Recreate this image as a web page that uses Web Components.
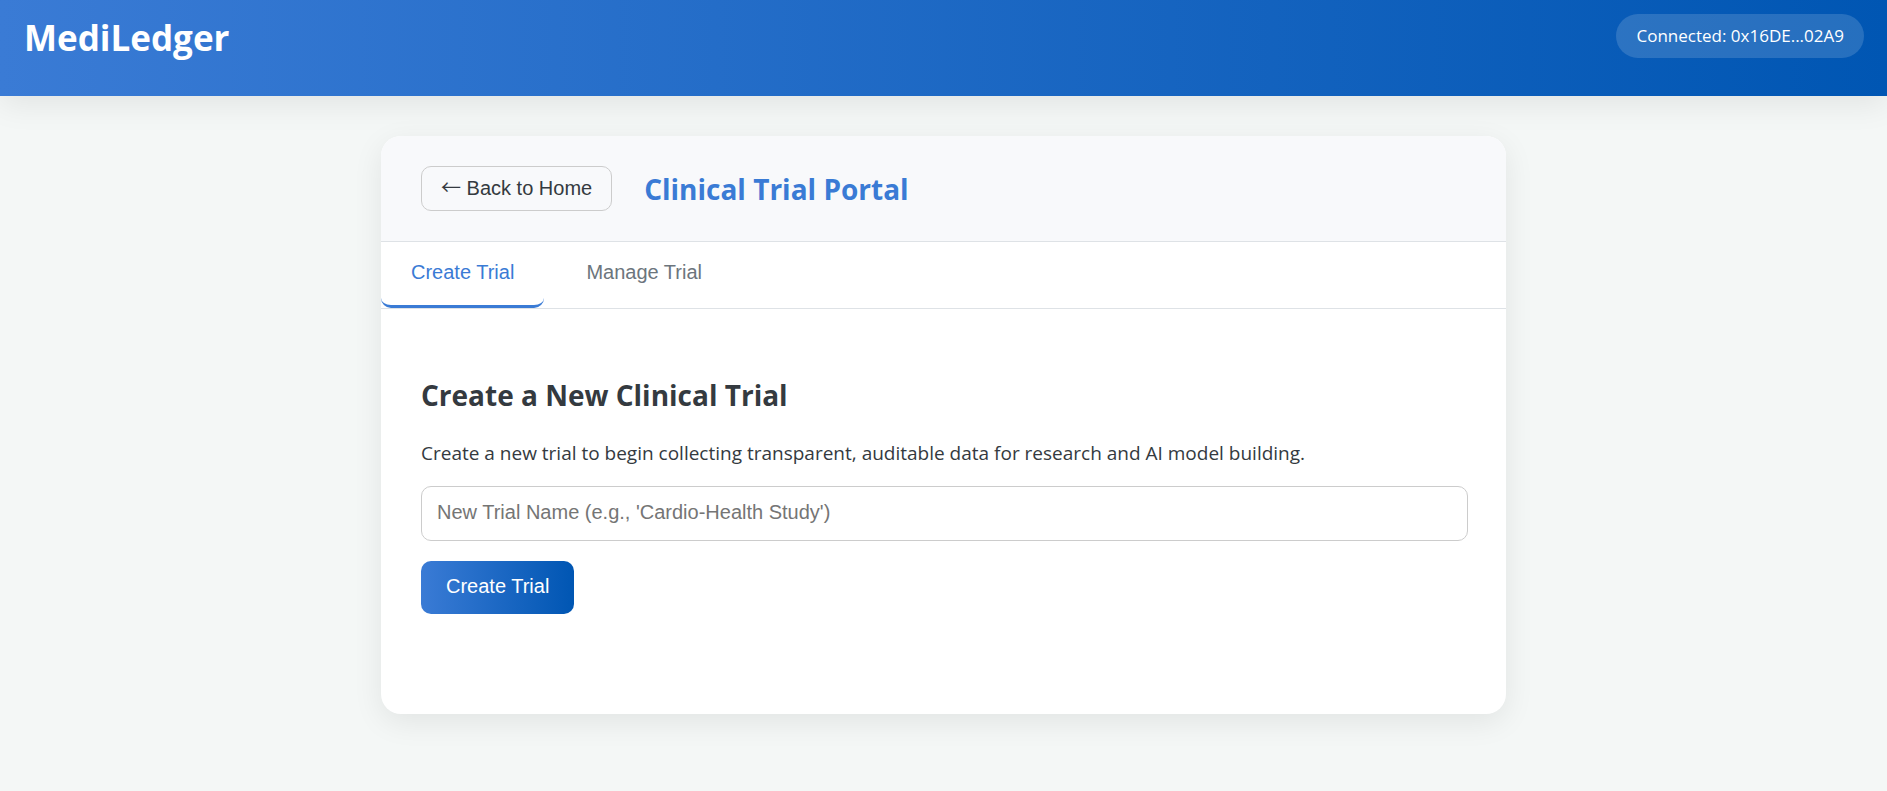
<!DOCTYPE html>
<html lang="en">
<head>
<meta charset="utf-8">
<meta name="viewport" content="width=device-width, initial-scale=1">
<title>MediLedger</title>
<style>
  :root {
    --primary: #3a7bd5;
    --primary-dark: #0056b3;
    --ink: #343a40;
    --muted: #6c757d;
    --line: #dee2e6;
    --control-line: #ccc;
    --shadow: 0 8px 30px rgba(0, 0, 0, .08);
    --ui: "Liberation Sans", Arial, sans-serif;
  }
  body {
    margin: 0;
    background: #f4f7f6;
    color: var(--ink);
    font: 19px/30px "Open Sans", "Noto Sans", sans-serif;
  }
</style>
</head>
<body>
<medi-app></medi-app>
<script>
  const define = (name, html) => {
    const template = document.createElement('template');
    template.innerHTML = html;
    customElements.define(name, class extends HTMLElement {
      constructor() {
        super();
        this.attachShadow({ mode: 'open' }).append(template.content.cloneNode(true));
      }
    });
  };

  define('medi-header', `
    <style>
      :host {
        display: flex;
        justify-content: space-between;
        align-items: flex-start;
        box-sizing: border-box;
        min-height: 96px;
        padding: 14px 23px 14px 24px;
        color: #fff;
        background: linear-gradient(to right, var(--primary), var(--primary-dark));
        box-shadow: var(--shadow);
      }
      h1 { margin: 0; font-size: 35px; line-height: 48px; font-weight: 700; }
      .wallet {
        padding: 7px 20px;
        border-radius: 25px;
        background: rgba(255, 255, 255, .15);
        font-size: 17px;
      }
    </style>
    <h1><slot></slot></h1>
    <div class="wallet"><slot name="wallet"></slot></div>
  `);

  define('medi-card', `
    <style>
      :host {
        display: block;
        width: 100%;
        max-width: 1125px;
        margin: 40px auto;
        border-radius: 20px;
        overflow: hidden;
        background: #fff;
        box-shadow: var(--shadow);
      }
    </style>
    <slot></slot>
  `);

  define('portal-heading', `
    <style>
      :host {
        display: flex;
        align-items: flex-start;
        gap: 32px;
        padding: 30px 40px 28px;
        background: #f8f9fb;
        border-bottom: 1px solid var(--line);
      }
      button {
        height: 45px;
        padding: 0 19px 2px;
        border: 1px solid var(--control-line);
        border-radius: 10px;
        background: transparent;
        color: var(--ink);
        font: 20px/23px var(--ui);
        cursor: pointer;
      }
      .arrow { font-family: "Noto Sans CJK SC", sans-serif; }
      h2 { margin: 0; color: var(--primary); font-size: 28px; line-height: 47px; font-weight: 700; }
    </style>
    <button type="button"><span class="arrow">←</span> Back to Home</button>
    <h2><slot></slot></h2>
  `);

  define('portal-tabs', `
    <style>
      :host { display: flex; gap: 12px; border-bottom: 1px solid var(--line); }
      button {
        height: 66px;
        padding: 0 30px 2px;
        border: 0;
        border-bottom: 3px solid transparent;
        border-radius: 10px;
        background: none;
        color: var(--muted);
        font: 20px/23px var(--ui);
        cursor: pointer;
      }
      button[aria-selected="true"] { color: var(--primary); border-bottom-color: var(--primary); }
    </style>
    <button type="button" role="tab" aria-selected="true">Create Trial</button>
    <button type="button" role="tab" aria-selected="false">Manage Trial</button>
  `);

  define('trial-form', `
    <style>
      :host { display: block; padding: 64px 38px 100px 40px; }
      h2 { margin: 0 0 20px; font-size: 28px; line-height: 45px; font-weight: 700; }
      p { margin: 0 0 18px; }
      input {
        display: block;
        box-sizing: border-box;
        width: 100%;
        height: 55px;
        margin: 0 0 20px;
        padding: 0 15px 2px;
        border: 1px solid var(--control-line);
        border-radius: 10px;
        background: #fff;
        color: var(--ink);
        font: 20px/23px var(--ui);
      }
      input::placeholder { color: #757575; opacity: 1; }
      button {
        display: block;
        height: 53px;
        padding: 0 25px 2px;
        border: 0;
        border-radius: 10px;
        background: linear-gradient(to right, var(--primary), var(--primary-dark));
        color: #fff;
        font: 20px/23px var(--ui);
        cursor: pointer;
      }
    </style>
    <h2>Create a New Clinical Trial</h2>
    <p>Create a new trial to begin collecting transparent, auditable data for research and AI model building.</p>
    <form>
      <input type="text" aria-label="New trial name" placeholder="New Trial Name (e.g., 'Cardio-Health Study')">
      <button type="button">Create Trial</button>
    </form>
  `);

  define('medi-app', `
    <style>:host { display: block; }</style>
    <medi-header>MediLedger<span slot="wallet">Connected: 0x16DE...02A9</span></medi-header>
    <main>
      <medi-card>
        <portal-heading>Clinical Trial Portal</portal-heading>
        <portal-tabs role="tablist"></portal-tabs>
        <trial-form></trial-form>
      </medi-card>
    </main>
  `);
</script>
</body>
</html>
